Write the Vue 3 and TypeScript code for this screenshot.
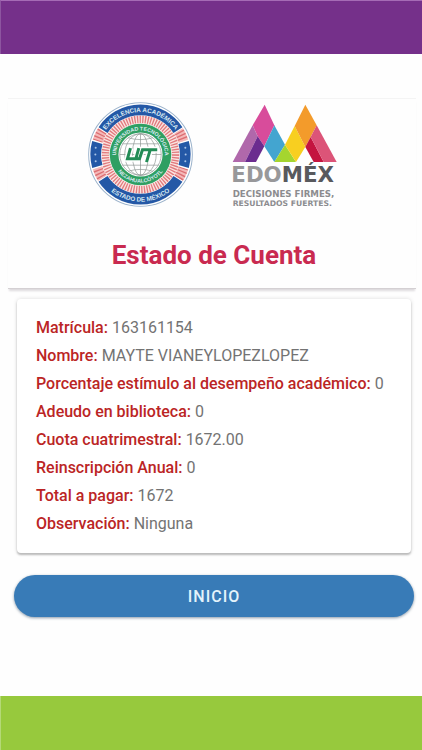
<script setup lang="ts">
interface Field {
  label: string
  value: string
}

const fields: Field[] = [
  { label: 'Matrícula', value: '163161154' },
  { label: 'Nombre', value: 'MAYTE VIANEYLOPEZLOPEZ' },
  { label: 'Porcentaje estímulo al desempeño académico', value: '0' },
  { label: 'Adeudo en biblioteca', value: '0' },
  { label: 'Cuota cuatrimestral', value: '1672.00' },
  { label: 'Reinscripción Anual', value: '0' },
  { label: 'Total a pagar', value: '1672' },
  { label: 'Observación', value: 'Ninguna' },
]
</script>

<template>
  <div class="screen">
    <div class="bar bar-top"></div>
    <main class="content">
      <header class="header">
        <div class="logos">
          <svg class="seal" viewBox="0 0 314 314" role="img" aria-label="Universidad Tecnológica de Nezahualcóyotl">
            <defs>
              <path id="arc-outer-top" d="M30 157 A127 127 0 0 1 284 157" />
              <path id="arc-outer-bottom" d="M16 157 A141 141 0 0 0 298 157" />
              <path id="arc-inner-top" d="M88 182 A73 73 0 1 1 226 182" />
              <path id="arc-inner-bottom" d="M73 157 A84 84 0 0 0 241 157" />
            </defs>
            <circle cx="157" cy="157" r="155" fill="#fff" stroke="#9db4cc" stroke-width="3" />
            <circle cx="157" cy="157" r="134" fill="none" stroke="#f4b9b9" stroke-width="30" />
            <circle cx="157" cy="157" r="134" fill="none" stroke="#dc6f73" stroke-width="30" stroke-dasharray="4 6" />
            <circle cx="157" cy="157" r="106" fill="none" stroke="#fbe3e0" stroke-width="26" />
            <circle cx="157" cy="157" r="106" fill="none" stroke="#e17b7e" stroke-width="24" stroke-dasharray="4 4" />
            <g fill="none" stroke="#fff" stroke-width="36">
              <path d="M43 86 A134 134 0 0 1 271 86" />
              <path d="M43 228 A134 134 0 0 0 271 228" />
              <path d="M29 117 A134 134 0 0 0 29 197" />
              <path d="M285 117 A134 134 0 0 1 285 197" />
            </g>
            <g fill="none" stroke="#2458a6" stroke-width="32">
              <path d="M45 84 A134 134 0 0 1 269 84" />
              <path d="M45 230 A134 134 0 0 0 269 230" />
              <path d="M28 121 A134 134 0 0 0 28 193" />
              <path d="M286 121 A134 134 0 0 1 286 193" />
            </g>
            <g fill="#a9c3e6">
              <circle cx="23" cy="137" r="3" /><circle cx="22" cy="157" r="3" /><circle cx="23" cy="177" r="3" />
              <circle cx="291" cy="137" r="3" /><circle cx="292" cy="157" r="3" /><circle cx="291" cy="177" r="3" />
            </g>
            <circle cx="157" cy="157" r="92" fill="#2f9f62" />
            <circle cx="157" cy="157" r="66" fill="#fff" />
            <g fill="none" stroke="#8b9491" stroke-width="2">
              <circle cx="157" cy="157" r="62" />
              <ellipse cx="157" cy="157" rx="24" ry="62" />
              <ellipse cx="157" cy="157" rx="47" ry="62" />
              <path d="M157 95V219M95 157H219M103 125H211M103 189H211M120 107Q157 118 194 107M120 207Q157 196 194 207" />
            </g>
            <g fill="none" stroke="#fff" stroke-width="18">
              <path d="M127 138L118 170H144L153 138M153 170L162 143H207M186 143L175 180" />
            </g>
            <g fill="none" stroke="#238c56" stroke-width="9">
              <path d="M127 138L118 170H143L152 138M143 170H154L163 143H207M186 143L175 180" />
            </g>
            <g class="seal-text" text-anchor="middle">
              <text font-size="19"><textPath href="#arc-outer-top" startOffset="50%">EXCELENCIA ACADÉMICA</textPath></text>
              <text font-size="19"><textPath href="#arc-outer-bottom" startOffset="50%">ESTADO DE MÉXICO</textPath></text>
              <text font-size="16"><textPath href="#arc-inner-top" startOffset="50%">UNIVERSIDAD TECNOLÓGICA</textPath></text>
              <text font-size="16"><textPath href="#arc-inner-bottom" startOffset="50%">NEZAHUALCÓYOTL</textPath></text>
            </g>
          </svg>
          <svg class="edomex" viewBox="0 6 324 324" role="img" aria-label="Edoméx">
            <path d="M98 14L62 76L77 109L97 139L127 76Z" fill="#d84c9b" />
            <path d="M62 76L2 186H39L77 109Z" fill="#b068ab" />
            <path d="M77 109L39 186H72L97 139Z" fill="#6b2c8f" />
            <path d="M127 76L159 134L127 186L97 139Z" fill="#43a5d0" />
            <path d="M159 134L192 186H127Z" fill="#a5d52f" />
            <path d="M188 78L159 134L192 186L220 141Z" fill="#f8cf20" />
            <path d="M220 14L188 78L220 141L236 111L254 76Z" fill="#f39b2b" />
            <path d="M236 111L220 141L245 186H275Z" fill="#c4143f" />
            <path d="M254 76L236 111L275 186H314Z" fill="#dc5478" />
            <text class="brand" x="-2" y="247"><tspan fill="#98989a">EDO</tspan><tspan fill="#58595d">MÉX</tspan></text>
            <text class="slogan" x="2" y="290" font-size="26">DECISIONES FIRMES,</text>
            <text class="slogan" x="2" y="317" font-size="23">RESULTADOS FUERTES.</text>
          </svg>
        </div>
        <h1>Estado de Cuenta</h1>
      </header>
      <section class="card">
        <p v-for="field in fields" :key="field.label">
          <strong>{{ field.label }}:</strong> {{ field.value }}
        </p>
      </section>
      <button type="button" class="home">INICIO</button>
    </main>
    <div class="bar bar-bottom"></div>
  </div>
</template>

<style>
body {
  margin: 0;
  background: #fefefe;
}
</style>

<style scoped>
.screen {
  display: flex;
  flex-direction: column;
  min-height: 100vh;
  font-family: Roboto, "Liberation Sans", sans-serif;
}

.bar {
  box-sizing: border-box;
  height: 54px;
}

.bar-top {
  background: #75308a;
  border-top: 1px solid #a56bb5;
  border-left: 1px solid #8d55a0;
}

.bar-bottom {
  background: #97c93d;
  border-left: 1px solid #b4d977;
}

.content {
  flex: 1;
  padding: 44px 6px 0 8px;
}

.header {
  padding: 3px 0 16px 4px;
  border-top: 1px solid #f4f4f4;
  border-bottom: 1px solid #d4d0d3;
  box-shadow: 0 3px 2px -1px #dddadd;
}

.logos {
  display: flex;
  justify-content: center;
  gap: 39px;
}

.seal {
  width: 105px;
  height: 105px;
}

.edomex {
  width: 108px;
  height: 108px;
  overflow: visible;
}

.seal-text {
  fill: #d9eaf2;
  font-family: "Liberation Sans", sans-serif;
  font-weight: 700;
}

.brand {
  font: 700 64px "DejaVu Sans", sans-serif;
}

.slogan {
  fill: #8c8c8f;
  font-family: "DejaVu Sans", sans-serif;
  font-weight: 700;
}

h1 {
  margin: 28px 0 0;
  color: #c92a50;
  font-size: 26px;
  font-weight: 700;
  line-height: 34px;
  text-align: center;
}

.card {
  margin: 10px 5px 0 9px;
  padding: 15px 19px;
  border-radius: 4px;
  background: #fff;
  box-shadow: 0 2px 2px #bbb, 0 0 4px #ddd;
}

.card p {
  margin: 0;
  color: #737373;
  font-size: 16px;
  line-height: 28px;
}

.card strong {
  color: #bb2525;
  font-weight: 500;
}

.home {
  display: block;
  width: calc(100% - 8px);
  height: 42px;
  margin: 22px 2px 0 6px;
  border: 0;
  border-radius: 21px;
  background: #387bb7;
  box-shadow: 0 1px 3px #8a9aaa;
  color: #e4f3fb;
  font: 500 16px Roboto, "Liberation Sans", sans-serif;
  letter-spacing: 1px;
}
</style>
